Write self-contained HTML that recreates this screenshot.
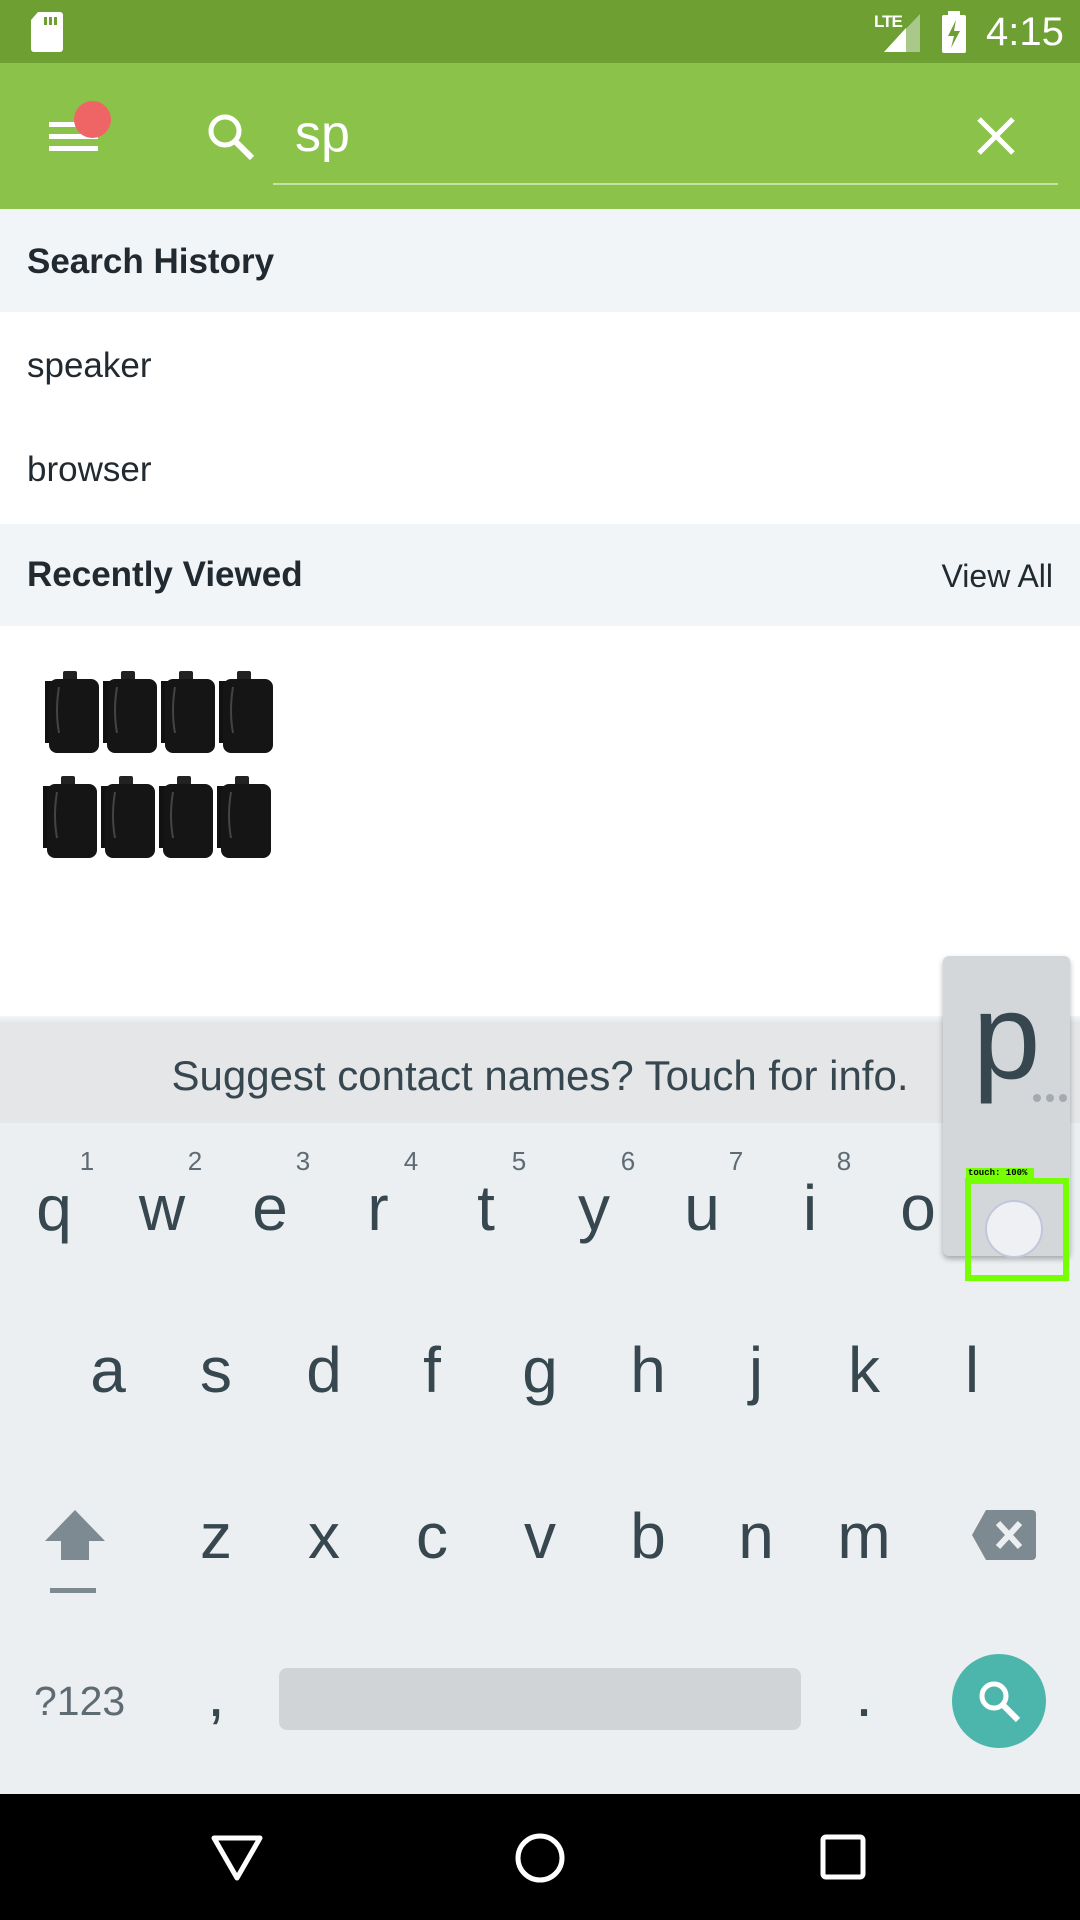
<!DOCTYPE html>
<html><head><meta charset="utf-8"><style>
*{margin:0;padding:0;box-sizing:border-box}
body{width:1080px;height:1920px;position:relative;overflow:hidden;background:#fff;font-family:"Liberation Sans",sans-serif;color:#212a30}
.a{position:absolute}
.k{position:absolute;width:108px;text-align:center;font-size:64px;color:#37474f;line-height:1}
.n{position:absolute;width:40px;text-align:center;font-size:26px;color:#5f6b73;line-height:1}
</style></head><body>
<div class="a" style="left:0;top:0;width:1080px;height:63px;background:#6e9f33"></div>
<svg class="a" style="top:12px;left:30px" width="34" height="40"><path d="M8 0H30a3 3 0 0 1 3 3V37a3 3 0 0 1-3 3H4a3 3 0 0 1-3-3V8z" fill="#fff"/><rect x="14" y="5" width="3" height="8" fill="#6e9f33"/><rect x="19" y="5" width="3" height="8" fill="#6e9f33"/><rect x="24" y="5" width="3" height="8" fill="#6e9f33"/></svg>
<div class="a" style="left:874px;top:12px;font-size:17px;font-weight:bold;color:#fff;letter-spacing:-1px">LTE</div>
<svg class="a" style="left:884px;top:14px" width="40" height="38"><path d="M36 0V38H0z" fill="#a9c98a"/><path d="M22 14V38H0z" fill="#fff"/></svg>
<svg class="a" style="left:942px;top:11px" width="24" height="42"><rect x="6" y="0" width="12" height="5" fill="#fff"/><rect x="0" y="4" width="24" height="38" rx="2" fill="#fff"/><path d="M14 9L6 25H12L9 37L18 20H12z" fill="#6e9f33"/></svg>
<div class="a" style="left:986px;top:10px;font-size:40px;color:#fff">4:15</div>

<div class="a" style="left:0;top:63px;width:1080px;height:146px;background:#8bc34a"></div>
<div class="a" style="left:49px;top:122px;width:49px;height:5px;background:#fff"></div>
<div class="a" style="left:49px;top:134px;width:49px;height:5px;background:#fff"></div>
<div class="a" style="left:49px;top:146px;width:49px;height:5px;background:#fff"></div>
<div class="a" style="left:74px;top:101px;width:37px;height:37px;border-radius:50%;background:#ef6565"></div>
<svg class="a" style="left:206px;top:112px" width="50" height="50"><circle cx="19" cy="19" r="14" fill="none" stroke="#fff" stroke-width="5"/><path d="M29 29L46 46" stroke="#fff" stroke-width="6"/></svg>
<div class="a" style="left:295px;top:104px;font-size:52px;color:#fff">sp</div>
<div class="a" style="left:273px;top:183px;width:785px;height:2px;background:#c5e1a5"></div>
<svg class="a" style="left:976px;top:116px" width="40" height="40"><path d="M3 3L37 37M37 3L3 37" stroke="#fff" stroke-width="5"/></svg>

<div class="a" style="left:0;top:209px;width:1080px;height:103px;background:#f2f5f7"></div>
<div class="a" style="left:27px;top:242px;font-size:35px;font-weight:bold">Search History</div>
<div class="a" style="left:27px;top:346px;font-size:35px">speaker</div>
<div class="a" style="left:27px;top:450px;font-size:35px">browser</div>
<div class="a" style="left:0;top:524px;width:1080px;height:102px;background:#f2f5f7"></div>
<div class="a" style="left:27px;top:555px;font-size:35px;font-weight:bold">Recently Viewed</div>
<div class="a" style="right:27px;top:558px;font-size:32px">View All</div>

<svg class="a" style="left:43px;top:671px" width="240" height="196">
<defs><g id="sp"><rect x="2" y="10" width="8" height="62" fill="#111"/><rect x="20" y="0" width="14" height="10" rx="2" fill="#222"/><rect x="6" y="8" width="50" height="74" rx="8" fill="#151515"/><path d="M16 16Q12 40 16 62" stroke="#444" stroke-width="2" fill="none"/></g></defs>
<use href="#sp" x="0" y="0"/><use href="#sp" x="58" y="0"/><use href="#sp" x="116" y="0"/><use href="#sp" x="174" y="0"/>
<use href="#sp" x="-2" y="105"/><use href="#sp" x="56" y="105"/><use href="#sp" x="114" y="105"/><use href="#sp" x="172" y="105"/>
</svg>

<div class="a" style="left:0;top:1016px;width:1080px;height:8px;background:linear-gradient(#f4f5f6,#e2e4e6)"></div>
<div class="a" style="left:0;top:1024px;width:1080px;height:99px;background:#e4e6e8"></div>
<div class="a" style="left:0;top:1052px;width:1080px;text-align:center;font-size:42px;color:#37474f">Suggest contact names? Touch for info.</div>
<div class="a" style="left:0;top:1123px;width:1080px;height:671px;background:#eceff1"></div>

<div class="n" style="left:67px;top:1148px">1</div><div class="n" style="left:175px;top:1148px">2</div><div class="n" style="left:283px;top:1148px">3</div><div class="n" style="left:391px;top:1148px">4</div><div class="n" style="left:499px;top:1148px">5</div><div class="n" style="left:608px;top:1148px">6</div><div class="n" style="left:716px;top:1148px">7</div><div class="n" style="left:824px;top:1148px">8</div>
<div class="k" style="left:0;top:1176px">q</div><div class="k" style="left:108px;top:1176px">w</div><div class="k" style="left:216px;top:1176px">e</div><div class="k" style="left:324px;top:1176px">r</div><div class="k" style="left:432px;top:1176px">t</div><div class="k" style="left:540px;top:1176px">y</div><div class="k" style="left:648px;top:1176px">u</div><div class="k" style="left:756px;top:1176px">i</div><div class="k" style="left:864px;top:1176px">o</div>
<div class="k" style="left:54px;top:1338px">a</div><div class="k" style="left:162px;top:1338px">s</div><div class="k" style="left:270px;top:1338px">d</div><div class="k" style="left:378px;top:1338px">f</div><div class="k" style="left:486px;top:1338px">g</div><div class="k" style="left:594px;top:1338px">h</div><div class="k" style="left:702px;top:1338px">j</div><div class="k" style="left:810px;top:1338px">k</div><div class="k" style="left:918px;top:1338px">l</div>
<div class="k" style="left:162px;top:1504px">z</div><div class="k" style="left:270px;top:1504px">x</div><div class="k" style="left:378px;top:1504px">c</div><div class="k" style="left:486px;top:1504px">v</div><div class="k" style="left:594px;top:1504px">b</div><div class="k" style="left:702px;top:1504px">n</div><div class="k" style="left:810px;top:1504px">m</div>
<svg class="a" style="left:44px;top:1508px" width="62" height="86"><path d="M31 2L61 33H45V52H17V33H1z" fill="#7d8a92"/><rect x="6" y="80" width="46" height="5" fill="#7d8a92"/></svg>
<svg class="a" style="left:972px;top:1510px" width="64" height="50"><path d="M14 0H60a4 4 0 0 1 4 4V46a4 4 0 0 1-4 4H14L0 25z" fill="#7d8a92"/><path d="M26 13L48 37M48 13L26 37" stroke="#eceff1" stroke-width="6"/></svg>
<div class="a" style="left:34px;top:1678px;font-size:41px;color:#5f6b73">?123</div>
<div class="k" style="left:162px;top:1662px">,</div>
<div class="a" style="left:279px;top:1668px;width:522px;height:62px;border-radius:8px;background:#d1d4d7"></div>
<div class="k" style="left:810px;top:1662px">.</div>
<div class="a" style="left:952px;top:1654px;width:94px;height:94px;border-radius:50%;background:#4db6ac"></div>
<svg class="a" style="left:976px;top:1678px" width="48" height="48"><circle cx="18" cy="18" r="12" fill="none" stroke="#fff" stroke-width="5"/><path d="M27 27L42 42" stroke="#fff" stroke-width="6"/></svg>

<div class="a" style="left:943px;top:956px;width:127px;height:300px;border-radius:6px;background:#d4d7da;box-shadow:0 3px 6px rgba(0,0,0,.3)"></div>
<div class="a" style="left:943px;top:975px;width:127px;text-align:center;font-size:122px;color:#37474f;line-height:1">p</div>
<div class="a" style="left:1033px;top:1094px;width:8px;height:8px;border-radius:50%;background:#a4aaaf"></div>
<div class="a" style="left:1046px;top:1094px;width:8px;height:8px;border-radius:50%;background:#a4aaaf"></div>
<div class="a" style="left:1059px;top:1094px;width:8px;height:8px;border-radius:50%;background:#a4aaaf"></div>
<div class="a" style="left:966px;top:1168px;width:68px;height:11px;background:#76ff03;font-size:9px;font-weight:bold;line-height:11px;font-family:'Liberation Mono',monospace;padding-left:2px;color:#000">touch: 100%</div>
<div class="a" style="left:965px;top:1178px;width:104px;height:103px;border:6px solid #76ff03"></div>
<div class="a" style="left:985px;top:1200px;width:58px;height:58px;border-radius:50%;background:#eef0f3;border:2px solid #c2c6dc"></div>

<div class="a" style="left:0;top:1794px;width:1080px;height:126px;background:#000"></div>
<svg class="a" style="left:210px;top:1834px" width="54" height="48"><path d="M4 4H50L27 44z" fill="none" stroke="#fff" stroke-width="5" stroke-linejoin="round"/></svg>
<svg class="a" style="left:514px;top:1832px" width="52" height="52"><circle cx="26" cy="26" r="22" fill="none" stroke="#fff" stroke-width="5"/></svg>
<svg class="a" style="left:820px;top:1834px" width="46" height="46"><rect x="3" y="3" width="40" height="40" rx="3" fill="none" stroke="#fff" stroke-width="5"/></svg>
</body></html>
